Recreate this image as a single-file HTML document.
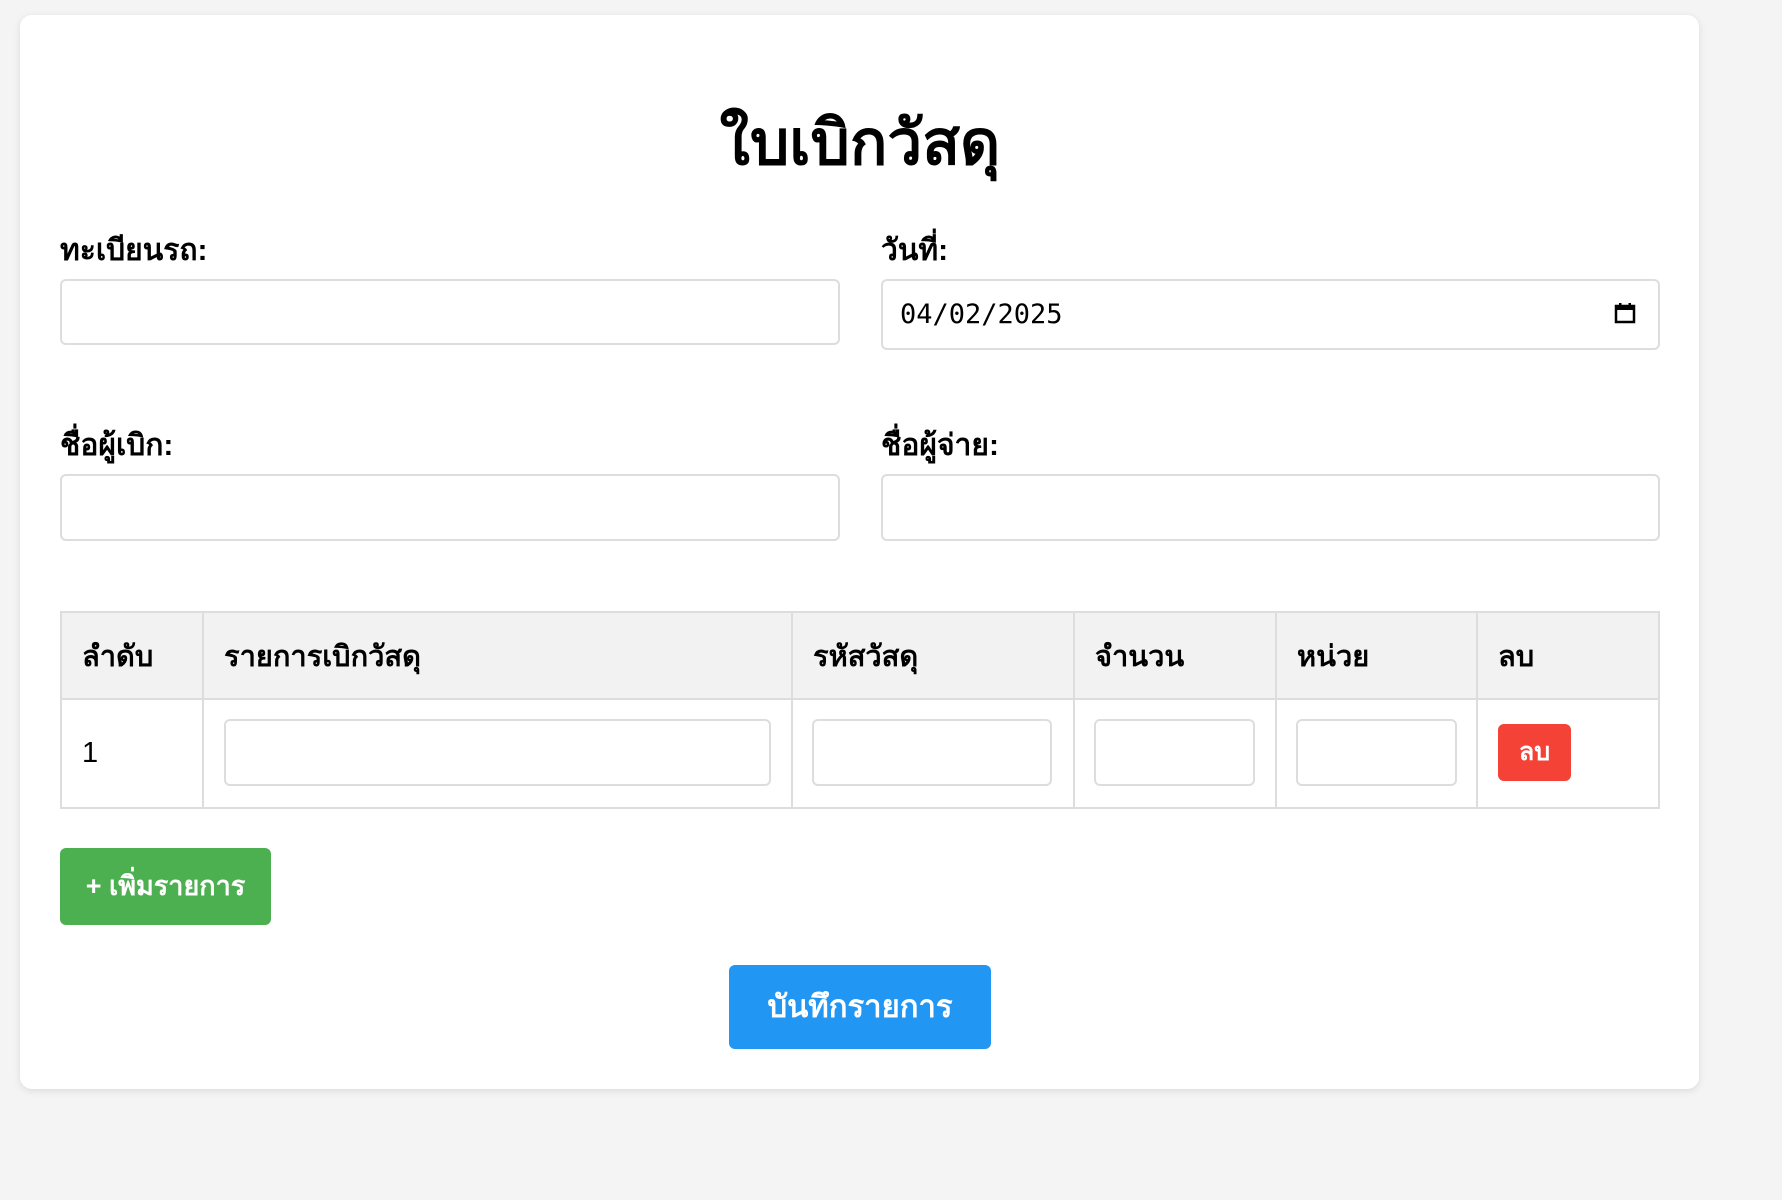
<!DOCTYPE html>
<html><head><meta charset="utf-8">
<style>
*{box-sizing:border-box;margin:0;padding:0}
body{width:1782px;height:1200px;background:#f4f4f4;font-family:"Liberation Sans",sans-serif;position:relative;overflow:hidden;color:#000}
.card{position:absolute;left:20px;top:15px;width:1679px;height:1074px;background:#fff;border-radius:12px;box-shadow:0 2px 8px rgba(0,0,0,0.1)}
.a{position:absolute}
h1{position:absolute;left:0;width:1720px;top:113px;text-align:center;font-size:62px;font-weight:bold;line-height:1}
.lbl{position:absolute;font-size:30px;font-weight:bold;line-height:1}
.inp{position:absolute;border:2px solid #ddd;border-radius:6px;background:#fff}
table{position:absolute;left:60px;top:611px;width:1600px;border-collapse:collapse}
td,th{border:2px solid #ddd;text-align:left;padding:0 20px;font-size:29px}
th{background:#f2f2f2;height:87px;font-weight:bold}
td{height:109px}
.btn{position:absolute;color:#fff;border-radius:6px;text-align:center;font-size:27px;font-weight:bold}
</style></head><body>
<div class="card"></div>
<h1>ใบเบิกวัสดุ</h1>
<div class="lbl" style="left:60px;top:236px">ทะเบียนรถ:</div>
<div class="lbl" style="left:881px;top:236px">วันที่:</div>
<div class="inp" style="left:60px;top:279px;width:780px;height:66px"></div>
<div class="inp" style="left:881px;top:279px;width:779px;height:71px"></div>
<div class="a" style="left:900px;top:299px;font-family:'DejaVu Sans Mono',monospace;font-size:27px">04/02/2025</div>
<svg class="a" style="left:1614px;top:302px" width="22" height="22" viewBox="0 0 22 22"><rect x="2" y="4" width="18" height="16" fill="none" stroke="#000" stroke-width="2.5"/><rect x="2" y="4" width="18" height="4" fill="#000"/><rect x="5" y="1" width="2.5" height="4" fill="#000"/><rect x="14.5" y="1" width="2.5" height="4" fill="#000"/></svg>
<div class="lbl" style="left:60px;top:431px">ชื่อผู้เบิก:</div>
<div class="lbl" style="left:881px;top:431px">ชื่อผู้จ่าย:</div>
<div class="inp" style="left:60px;top:474px;width:780px;height:67px"></div>
<div class="inp" style="left:881px;top:474px;width:779px;height:67px"></div>
<table>
<tr><th style="width:142px">ลำดับ</th><th style="width:589px">รายการเบิกวัสดุ</th><th style="width:282px">รหัสวัสดุ</th><th style="width:202px">จำนวน</th><th style="width:201px">หน่วย</th><th>ลบ</th></tr>
<tr><td>1</td><td></td><td></td><td></td><td></td><td></td></tr>
</table>
<div class="inp" style="left:224px;top:719px;width:547px;height:67px"></div>
<div class="inp" style="left:812px;top:719px;width:240px;height:67px"></div>
<div class="inp" style="left:1094px;top:719px;width:161px;height:67px"></div>
<div class="inp" style="left:1296px;top:719px;width:161px;height:67px"></div>
<div class="btn" style="left:1498px;top:724px;width:73px;height:57px;line-height:57px;background:#f44336;font-size:25px">ลบ</div>
<div class="btn" style="left:60px;top:848px;width:211px;height:77px;line-height:77px;background:#4caf50">+ เพิ่มรายการ</div>
<div class="btn" style="left:729px;top:965px;width:262px;height:84px;line-height:84px;background:#2196f3;font-size:31px">บันทึกรายการ</div>
</body></html>
